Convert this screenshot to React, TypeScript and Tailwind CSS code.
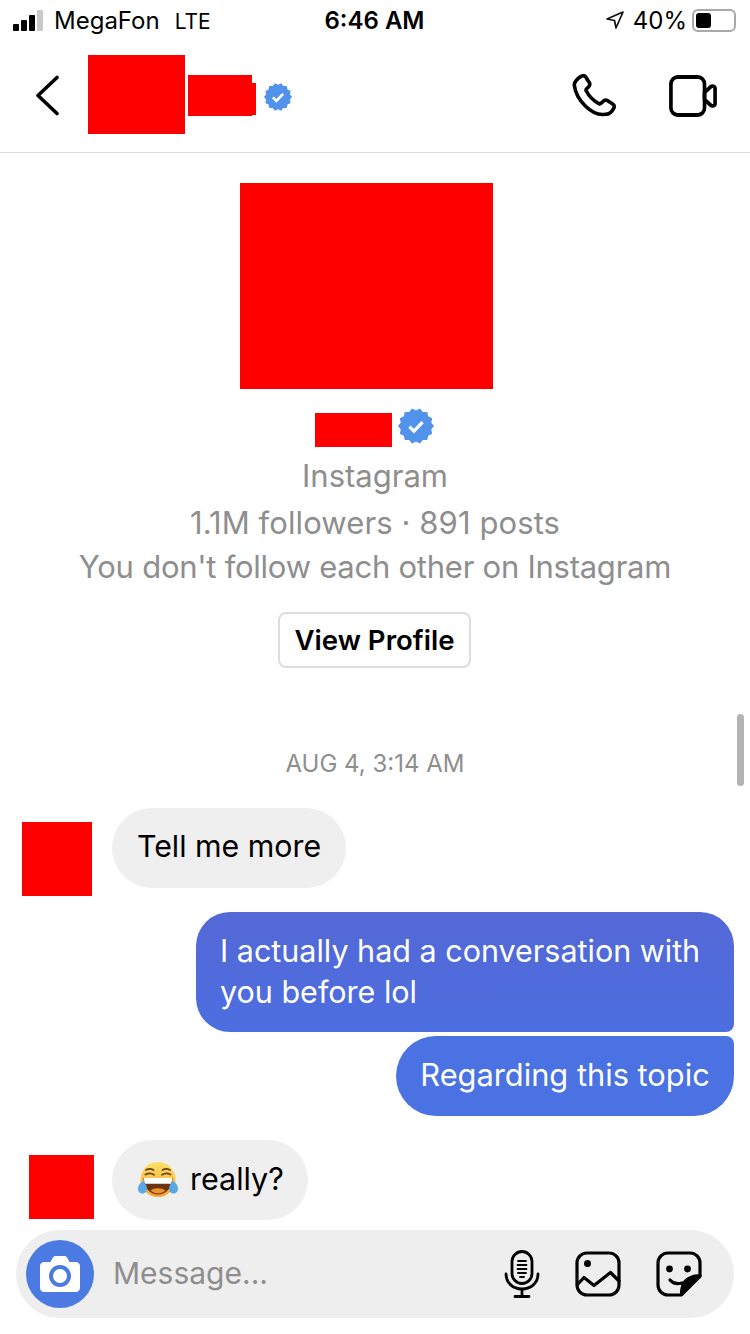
const Badge = ({ size }: { size: number }) => {
  const points: string[] = [];
  for (let i = 0; i < 28; i++) {
    const r = i % 2 === 0 ? 12 : 10.4;
    const a = (i / 28) * Math.PI * 2;
    points.push(`${12 + r * Math.cos(a)},${12 + r * Math.sin(a)}`);
  }
  return (
    <svg width={size} height={size} viewBox="0 0 24 24" className="shrink-0">
      <polygon points={points.join(" ")} fill="#5192ea" />
      <path d="M7.6 12.4l3 3 5.8-6" fill="none" stroke="#fff" strokeWidth="2.2" />
    </svg>
  );
};

const SignalBars = () => (
  <div className="flex items-end gap-[2px] h-[21px]">
    <div className="w-[6px] h-[7px] rounded-[1px] bg-black" />
    <div className="w-[6px] h-[11px] rounded-[1px] bg-black" />
    <div className="w-[6px] h-[16px] rounded-[1px] bg-black" />
    <div className="w-[6px] h-[21px] rounded-[1px] bg-[#c9c9c9]" />
  </div>
);

const StatusBar = () => (
  <div className="h-[40px] flex items-center justify-between pl-[13px] pr-[14px] text-[24px] text-black leading-none">
    <div className="w-[260px] flex items-center">
      <SignalBars />
      <span className="ml-[11px] mt-[2px]">MegaFon</span>
      <span className="ml-[15px] mt-[2px] text-[21px]">LTE</span>
    </div>
    <span className="font-semibold mt-[2px]">6:46 AM</span>
    <div className="w-[260px] flex items-center justify-end">
      <svg width="20" height="20" viewBox="0 0 20 20" fill="none" stroke="#111" strokeWidth="1.7" strokeLinejoin="round">
        <path d="M18 2L2 9l7.5 1.500L11 18z" />
      </svg>
      <span className="ml-[8px] mt-[2px]">40%</span>
      <div className="ml-[5px] w-[44px] h-[23px] rounded-[6px] border-2 border-[#a9a9a9] p-[2px]">
        <div className="w-[15px] h-full rounded-[3px] bg-black" />
      </div>
    </div>
  </div>
);

const Header = () => (
  <header className="h-[113px] border-b border-[#dcdcdc] flex items-start relative">
    <svg width="24" height="42" viewBox="0 0 24 42" fill="none" stroke="#000" strokeWidth="3.6" strokeLinecap="round" strokeLinejoin="round" className="ml-[35px] mt-[35px]">
      <path d="M22 2.500L3 20.500l19 18" />
    </svg>
    <div className="ml-[29px] mt-[15px] w-[97px] h-[79px] bg-[#ff0000]" />
    <div className="ml-[3px] mt-[35px] w-[64px] h-[41px] bg-[#ff0000]" />
    <div className="mt-[43px] w-[4px] h-[32px] bg-[#ff0000]" />
    <div className="ml-[8px] mt-[43px]">
      <Badge size={28} />
    </div>
    <svg width="46" height="46" viewBox="0 0 46 46" fill="none" stroke="#000" strokeWidth="3.6" strokeLinejoin="round" className="ml-auto mt-[34px]">
      <path d="M9.500 2.200c1.600-.9 3.400-.4 4.400 1l3.200 5c1 1.500.6 3.500-.6 4.700l-1.900 1.900c-.6.6-.7 1.500-.3 2.200 2.800 5.400 7.200 9.800 12.600 12.600.7.4 1.600.3 2.200-.3l1.900-1.900c1.200-1.200 3.200-1.600 4.700-.6l5 3.200c1.400 1 1.900 2.800 1 4.400-1.600 3-4.900 6.200-8.400 5.800C20.300 42.500 4 26.200 2.300 11.100 1.900 7.600 6.500 3.800 9.500 2.200z" />
    </svg>
    <svg width="48" height="42" viewBox="0 0 50 42" preserveAspectRatio="none" fill="none" stroke="#000" strokeWidth="3.8" strokeLinejoin="round" className="ml-[51px] mr-[33px] mt-[35px]">
      <rect x="2" y="2" width="35" height="38" rx="7" />
      <path d="M37 17.500L43.500 11.800c1.500-1.300 4.500-.6 4.500 1.800v14.800c0 2.400-3 3.100-4.500 1.800L37 24.500z" />
    </svg>
  </header>
);

const LaughEmoji = () => (
  <svg width="40" height="38" viewBox="0 0 40 38" className="shrink-0">
    <defs>
      <linearGradient id="face" x1="0" y1="0" x2="0" y2="1">
        <stop offset="0" stopColor="#fde067" />
        <stop offset="1" stopColor="#f4a62f" />
      </linearGradient>
    </defs>
    <circle cx="20" cy="18.500" r="17.500" fill="url(#face)" />
    <path d="M8 9c2.500-1.500 5-1.500 7.500 0M24.500 9c2.500-1.500 5-1.500 7.500 0" fill="none" stroke="#6b4213" strokeWidth="1.700" strokeLinecap="round" />
    <path d="M7.500 13.500c3-1.500 6-1.500 8.500.3M24 13.800c2.500-1.800 5.500-1.800 8.500-.3" fill="none" stroke="#6b4213" strokeWidth="1.700" strokeLinecap="round" />
    <path d="M5.500 17h29c0 9.500-6.500 16.500-14.500 16.500S5.500 26.500 5.500 17z" fill="#6b3410" />
    <path d="M6 17h28c0 2.500-.3 4-.9 5.800H6.900C6.300 21 6 19.500 6 17z" fill="#fff" />
    <path d="M12.500 29.500c4.500-3 10.500-3 15 0-4.500 4-10.500 4-15 0z" fill="#f0932b" />
    <path d="M5 20c-3 2-5 4.500-5 7.500 0 3 2 5 4.500 5S9 30.500 9 27.500c0-3-2-5-4-7.500zM35 20c3 2 5 4.500 5 7.500 0 3-2 5-4.500 5S31 30.500 31 27.500c0-3 2-5 4-7.500z" fill="#5aa7e6" />
  </svg>
);

const InputBar = () => (
  <div className="mx-[16px] mt-[10px] h-[88px] rounded-[44px] bg-[#eeeeee] flex items-center pl-[10px]">
    <div className="w-[68px] h-[68px] rounded-full bg-[#4a7ae2] flex items-center justify-center">
      <svg width="40" height="36" viewBox="0 0 40 36">
        <path d="M4 6h6.500l2-3.800C13.200.8 14.200 0 15.500 0h9c1.300 0 2.300.8 3 2.200l2 3.800H36c2.200 0 4 1.800 4 4v22c0 2.200-1.800 4-4 4H4c-2.200 0-4-1.800-4-4V10c0-2.200 1.800-4 4-4z" fill="#fff" />
        <circle cx="20" cy="20" r="9" fill="none" stroke="#4a7ae2" strokeWidth="4" />
      </svg>
    </div>
    <span className="ml-[19px] pb-[2px] text-[30px] text-[#8e8e8e]">Message...</span>
    <svg width="36" height="48" viewBox="0 0 36 48" fill="none" stroke="#000" strokeWidth="2.800" strokeLinecap="round" className="ml-auto">
      <rect x="8" y="1.500" width="20" height="32" rx="10" />
      <path d="M14 11h8M13.500 15h9M13.500 19h9M14 23h8M16 27h4" strokeWidth="1.800" />
      <path d="M2 24c0 9 7 15 16 15s16-6 16-15M18 39v7M11 46.500h14" />
    </svg>
    <svg width="46" height="46" viewBox="0 0 46 46" fill="none" stroke="#000" strokeWidth="3.200" strokeLinejoin="round" className="ml-[35px]">
      <rect x="2" y="2" width="42" height="42" rx="10" />
      <circle cx="12.500" cy="12.500" r="3.500" fill="#000" stroke="none" />
      <path d="M2.500 33.500L9 26.500l10 8 16.500-13 8.500 8.500" strokeLinecap="round" />
    </svg>
    <svg width="46" height="46" viewBox="0 0 46 46" fill="none" stroke="#000" strokeWidth="3.200" strokeLinejoin="round" className="ml-[35px] mr-[32px]">
      <path d="M12 2h22c5.500 0 10 4.500 10 10v13L25 44H12C6.500 44 2 39.500 2 34V12C2 6.500 6.500 2 12 2z" />
      <path d="M44 25c-4-.5-7 0-9 1.500-6 2-9.500 8-9.500 17z" fill="#000" />
      <circle cx="13.500" cy="18" r="3.400" fill="#000" stroke="none" />
      <circle cx="31.500" cy="18" r="3.400" fill="#000" stroke="none" />
      <path d="M14 29c3 3.500 7 4.500 12 3" strokeLinecap="round" />
    </svg>
  </div>
);

export default function App() {
  return (
    <div className="relative w-[750px] h-[1334px] overflow-hidden bg-white font-['Inter',sans-serif]">
      <StatusBar />
      <Header />

      <section className="flex flex-col items-center">
        <div className="mt-[30px] mr-[18px] w-[253px] h-[206px] bg-[#ff0000]" />
        <div className="mt-[19px] h-[36px] flex items-start -ml-[2px]">
          <div className="mt-[5px] w-[77px] h-[34px] bg-[#ff0000]" />
          <div className="ml-[6px]">
            <Badge size={36} />
          </div>
        </div>
        <p className="mt-[12px] text-[31px] leading-[40px] text-[#8e8e8e]">Instagram</p>
        <p className="mt-[7px] text-[31px] leading-[40px] tracking-[0.1px] text-[#8e8e8e]">1.1M followers · 891 posts</p>
        <p className="mt-[4px] text-[31px] leading-[40px] tracking-[-0.25px] text-[#8e8e8e]">You don't follow each other on Instagram</p>
        <button className="mt-[25px] mr-[1px] w-[193px] h-[56px] pt-[2px] rounded-[8px] border-2 border-[#dddddd] text-[27.6px] font-semibold text-black">
          View Profile
        </button>
        <p className="mt-[81px] text-[24px] leading-[30px] text-[#8e8e8e]">AUG 4, 3:14 AM</p>
      </section>

      <section className="mt-[29px]">
        <div className="flex items-start">
          <div className="ml-[22px] mt-[14px] w-[70px] h-[74px] bg-[#ff0000]" />
          <div className="ml-[20px] h-[80px] rounded-[40px] bg-[#efefef] pl-[25px] pr-[25px] pb-[2px] flex items-center text-[30.3px] text-black">
            Tell me more
          </div>
        </div>
        <div className="mt-[16px] mr-[16px] ml-auto w-[538px] h-[120px] rounded-[34px] rounded-br-[8px] bg-gradient-to-b from-[#5468d6] to-[#4c6ee0] px-[24px] pt-[18px] text-[30.5px] leading-[41px] text-white">
          I actually had a conversation with you before lol
        </div>
        <div className="mt-[4px] mr-[16px] ml-auto w-[338px] h-[80px] pb-[2px] rounded-[40px] rounded-tr-[8px] bg-[#4a72e2] flex items-center justify-center text-[30.8px] text-white">
          Regarding this topic
        </div>
        <div className="mt-[24px] flex items-start">
          <div className="ml-[29px] mt-[15px] w-[65px] h-[64px] bg-[#ff0000]" />
          <div className="ml-[18px] h-[80px] rounded-[40px] bg-[#efefef] pl-[26px] pr-[24px] flex items-center gap-[12px] text-[30.5px] text-black">
            <LaughEmoji />
            <span className="pb-[2px]">really?</span>
          </div>
        </div>
      </section>

      <InputBar />

      <div className="absolute left-[737px] top-[714px] w-[7px] h-[72px] rounded-full bg-[#b3b3b3]" />
    </div>
  );
}
